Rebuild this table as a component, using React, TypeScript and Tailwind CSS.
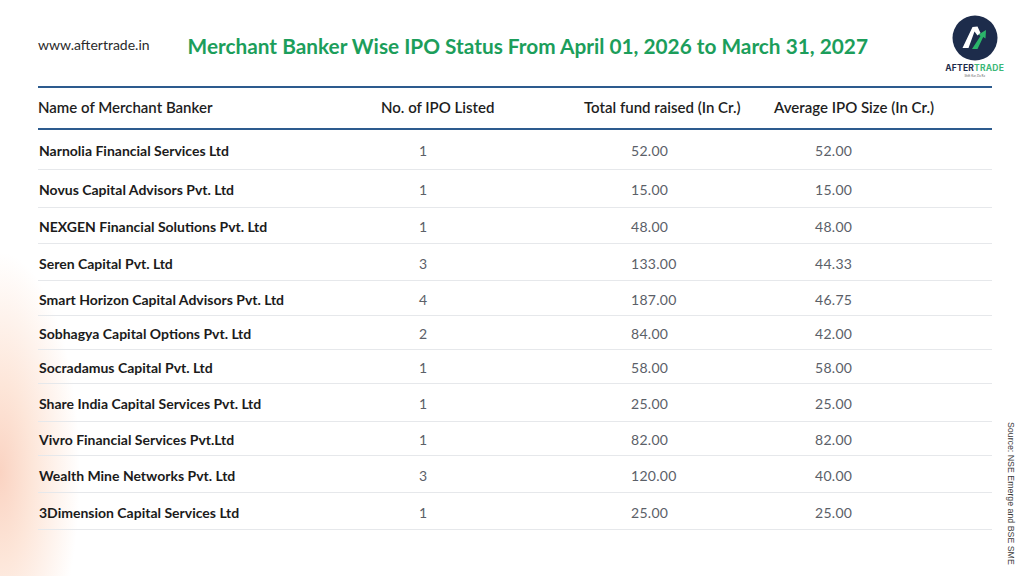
const rows = [
  { name: "Narnolia Financial Services Ltd", count: "1", total: "52.00", avg: "52.00", h: "h-[40px]" },
  { name: "Novus Capital Advisors Pvt. Ltd", count: "1", total: "15.00", avg: "15.00", h: "h-[38px]" },
  { name: "NEXGEN Financial Solutions Pvt. Ltd", count: "1", total: "48.00", avg: "48.00", h: "h-[36px]" },
  { name: "Seren Capital Pvt. Ltd", count: "3", total: "133.00", avg: "44.33", h: "h-[37px]" },
  { name: "Smart Horizon Capital Advisors Pvt. Ltd", count: "4", total: "187.00", avg: "46.75", h: "h-[35px]" },
  { name: "Sobhagya Capital Options Pvt. Ltd", count: "2", total: "84.00", avg: "42.00", h: "h-[34px]" },
  { name: "Socradamus Capital Pvt. Ltd", count: "1", total: "58.00", avg: "58.00", h: "h-[34px]" },
  { name: "Share India Capital Services Pvt. Ltd", count: "1", total: "25.00", avg: "25.00", h: "h-[38px]" },
  { name: "Vivro Financial Services Pvt.Ltd", count: "1", total: "82.00", avg: "82.00", h: "h-[34px]" },
  { name: "Wealth Mine Networks Pvt. Ltd", count: "3", total: "120.00", avg: "40.00", h: "h-[37px]" },
  { name: "3Dimension Capital Services Ltd", count: "1", total: "25.00", avg: "25.00", h: "h-[37px]" },
];

function Logo() {
  return (
    <div className="flex flex-col items-center">
      <svg width="46" height="46" viewBox="0 0 46 46">
        <circle cx="23" cy="23" r="22.5" fill="#1d2c4b" />
        {/* white peak */}
        <path d="M10.5 33 L20.5 12 L25.5 11.5 L28.5 18 L25.5 20.5 L22.5 16.5 L16.5 33 Z" fill="#ffffff" />
        {/* green arrow */}
        <path d="M20 34 L28.5 21 L26.5 19.5 L34 15 L33.5 23.5 L31.2 22 L25.5 34 Z" fill="#2bb56a" />
      </svg>
      <div className="mt-[3px] text-[8.5px] font-bold leading-none tracking-[0.2px] font-['Inter',sans-serif]">
        <span className="text-[#1d2c4b]">AFTER</span>
        <span className="text-[#3cb878]">TRADE</span>
      </div>
      <div className="mt-[2px] text-[3px] leading-none text-[#666]">Shift Kar, Da Ra</div>
    </div>
  );
}

export default function App() {
  return (
    <div className="flex h-[576px] w-[1024px] flex-col overflow-hidden bg-white bg-[radial-gradient(ellipse_80px_220px_at_0%_82%,#fad3c2_0%,#fde6d9_40%,#ffffff_100%)] font-['Lato',sans-serif]">
      {/* top header */}
      <div className="flex h-[86px] shrink-0 items-start pl-[38px] pr-[20px] pt-[15px]">
        <div className="mt-[19px] text-[14px] text-[#2b2b2b]">www.aftertrade.in</div>
        <h1 className="ml-[38px] mt-[15px] text-[20.8px] font-bold text-[#1c9e5b]">
          Merchant Banker Wise IPO Status From April 01, 2026 to March 31, 2027
        </h1>
        <div className="ml-auto">
          <Logo />
        </div>
      </div>

      <div className="flex flex-1">
        {/* table */}
        <div className="ml-[38px] w-[954px]">
          <div className="grid h-[44px] grid-cols-[343px_203px_190px_218px] items-center border-y-2 border-[#2d5b8e] pb-[2px] text-[15px] font-semibold text-[#1e1e1e]">
            <div>Name of Merchant Banker</div>
            <div>No. of IPO Listed</div>
            <div>Total fund raised (In Cr.)</div>
            <div>Average IPO Size (In Cr.)</div>
          </div>
          {rows.map((r) => (
            <div
              key={r.name}
              className={`grid grid-cols-[343px_203px_190px_218px] items-center border-b border-[#e6e8eb] pt-[2px] ${r.h}`}
            >
              <div className="pl-[1px] text-[14px] font-bold text-[#1b1b1b]">{r.name}</div>
              <div className="pl-[38px] text-[14px] tracking-[0.3px] text-[#5b6068]">{r.count}</div>
              <div className="pl-[47px] text-[14px] tracking-[0.3px] text-[#5b6068]">{r.total}</div>
              <div className="pl-[41px] text-[14px] tracking-[0.3px] text-[#5b6068]">{r.avg}</div>
            </div>
          ))}
        </div>

        {/* source note */}
        <div className="flex flex-1 items-end justify-center pb-[11px] pl-[4px]">
          <div className="text-[8.8px] text-[#3a3a3a] [writing-mode:vertical-rl] font-['Liberation_Sans',sans-serif]">
            Source: NSE Emerge and BSE SME
          </div>
        </div>
      </div>
    </div>
  );
}
